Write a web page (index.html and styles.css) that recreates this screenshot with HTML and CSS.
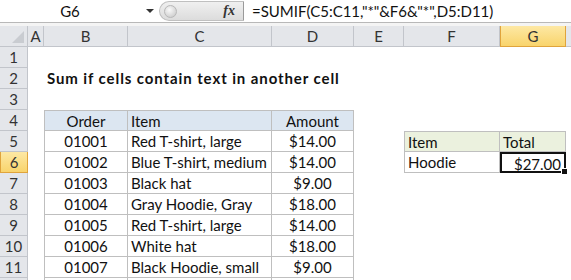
FILE: index.html
```html
<!DOCTYPE html>
<html lang="en">
<head>
<meta charset="UTF-8">
<title>Sum if cells contain text in another cell</title>
<link rel="stylesheet" href="styles.css">
</head>
<body>

<!-- formula bar -->
<div class="fbar">
    <div class="namebox">
        <span class="ref">G6</span>
        <span class="arrow"></span>
    </div>
    <div class="pill">
        <span class="knob"></span>
        <span class="fx">fx</span>
    </div>
    <div class="formula">=SUMIF(C5:C11,"*"&amp;F6&amp;"*",D5:D11)</div>
</div>
<div class="gap"></div>

<!-- sheet -->
<div class="sheet">
    <div class="corner"><span class="tri"></span></div>
    <div class="ch">A</div>
    <div class="ch">B</div>
    <div class="ch">C</div>
    <div class="ch">D</div>
    <div class="ch">E</div>
    <div class="ch">F</div>
    <div class="ch sel">G</div>
    <div class="ch end"></div>

    <!-- row 1 -->
    <div class="rh">1</div>
    <div></div><div></div><div></div><div></div><div></div><div></div><div></div><div></div>

    <!-- row 2 -->
    <div class="rh">2</div>
    <div></div>
    <div class="title">Sum if cells contain text in another cell</div>
    <div></div><div></div><div></div><div></div><div></div><div></div>

    <!-- row 3 -->
    <div class="rh">3</div>
    <div></div><div></div><div></div><div></div><div></div><div></div><div></div><div></div>

    <!-- row 4 -->
    <div class="rh">4</div>
    <div></div>
    <div class="t tl tt hd c">Order</div>
    <div class="t tt hd">Item</div>
    <div class="t tt hd c">Amount</div>
    <div></div><div></div><div></div><div></div>

    <!-- row 5 -->
    <div class="rh">5</div>
    <div></div>
    <div class="t tl c">01001</div>
    <div class="t">Red T-shirt, large</div>
    <div class="t c">$14.00</div>
    <div></div>
    <div class="t tl tt hd2">Item</div>
    <div class="t tt hd2">Total</div>
    <div></div>

    <!-- row 6 -->
    <div class="rh sel">6</div>
    <div></div>
    <div class="t tl c">01002</div>
    <div class="t">Blue T-shirt, medium</div>
    <div class="t c">$14.00</div>
    <div></div>
    <div class="t tl">Hoodie</div>
    <div class="t r active">$27.00<span class="handle"></span></div>
    <div></div>

    <!-- row 7 -->
    <div class="rh">7</div>
    <div></div>
    <div class="t tl c">01003</div>
    <div class="t">Black hat</div>
    <div class="t c">$9.00</div>
    <div></div><div></div><div></div><div></div>

    <!-- row 8 -->
    <div class="rh">8</div>
    <div></div>
    <div class="t tl c">01004</div>
    <div class="t">Gray Hoodie, Gray</div>
    <div class="t c">$18.00</div>
    <div></div><div></div><div></div><div></div>

    <!-- row 9 -->
    <div class="rh">9</div>
    <div></div>
    <div class="t tl c">01005</div>
    <div class="t">Red T-shirt, large</div>
    <div class="t c">$14.00</div>
    <div></div><div></div><div></div><div></div>

    <!-- row 10 -->
    <div class="rh">10</div>
    <div></div>
    <div class="t tl c">01006</div>
    <div class="t">White hat</div>
    <div class="t c">$18.00</div>
    <div></div><div></div><div></div><div></div>

    <!-- row 11 -->
    <div class="rh">11</div>
    <div></div>
    <div class="t tl c">01007</div>
    <div class="t">Black Hoodie, small</div>
    <div class="t c">$9.00</div>
    <div></div><div></div><div></div><div></div>

    <!-- row 12 (cut off by the window) -->
    <div class="rh"></div>
    <div></div>
    <div class="t tl"></div>
    <div class="t"></div>
    <div class="t"></div>
    <div></div><div></div><div></div><div></div>
</div>

</body>
</html>
```

FILE: styles.css
```css
body {
    margin: 0;
    width: 571px;
    height: 280px;
    overflow: hidden;
    background: #fff;
    font-family: Lato, "Open Sans", sans-serif;
    color: #111;
}

/* formula bar */
.fbar {
    display: flex;
    height: 22px;
    border-bottom: 1px solid #b8b8b8;
    background: #fff;
    font-size: 15px;
}

.namebox {
    width: 159px;
    display: flex;
    align-items: center;
}

.ref {
    width: 140px;
    text-align: center;
}

.arrow {
    width: 0;
    height: 0;
    border-left: 4px solid transparent;
    border-right: 4px solid transparent;
    border-top: 4px solid #333;
    margin-left: 6px;
}

.pill {
    width: 85px;
    margin-top: 1px;
    height: 20px;
    display: flex;
    align-items: center;
    background: linear-gradient(#f0f0f0, #dcdcdc);
    border: 1px solid #c0c0c0;
    border-right: 1px solid #9a9a9a;
    border-radius: 11px 0 0 11px;
    box-sizing: border-box;
}

.knob {
    width: 11px;
    height: 11px;
    border-radius: 50%;
    margin-left: 4px;
    background: radial-gradient(circle at 40% 35%, #fafafa, #c4c4c4);
    border: 1px solid #b8b8b8;
}

.fx {
    margin-left: auto;
    margin-right: 8px;
    font-family: "Liberation Serif", serif;
    font-style: italic;
    font-weight: bold;
    font-size: 14px;
    color: #333;
}

.formula {
    flex: 1;
    padding-left: 8px;
    line-height: 22px;
    white-space: nowrap;
}

.gap {
    height: 3px;
    background: #f4f4f4;
}

/* sheet grid */
.sheet {
    display: grid;
    grid-template-columns: 28px 16px 84px 144px 82px 50px 96px 66px 1fr;
    grid-template-rows: 21px;
    grid-auto-rows: 21px;
    height: 254px;
    overflow: hidden;
    font-size: 15px;
}

.sheet > div {
    box-sizing: border-box;
    line-height: 20px;
    white-space: nowrap;
}

.corner {
    background: #e4e6ea;
    border-right: 1px solid #c2c5cb;
    border-bottom: 1px solid #c2c5cb;
    position: relative;
}

.tri {
    position: absolute;
    right: 3px;
    bottom: 3px;
    width: 0;
    height: 0;
    border-left: 12px solid transparent;
    border-bottom: 12px solid #c9ccd1;
}

.ch, .rh {
    background: #e4e6ea;
    border-right: 1px solid #c2c5cb;
    border-bottom: 1px solid #c2c5cb;
    text-align: center;
    color: #333;
}

.ch.end {
    border-right: none;
}

.sel {
    background: linear-gradient(#fde8a4, #f9d46c);
    border-color: #e0a43c;
    border-left: 1px solid #e0a43c;
}

.title {
    font-weight: bold;
    letter-spacing: 0.9px;
    padding-left: 3px;
}

/* bordered table cells */
.t {
    border-right: 1px solid #bfbfbf;
    border-bottom: 1px solid #bfbfbf;
    padding: 0 3px;
}

.tl {
    border-left: 1px solid #bfbfbf;
}

.tt {
    border-top: 1px solid #bfbfbf;
}

.hd {
    background: #dce6f1;
}

.hd2 {
    background: #ebf1de;
}

.c {
    text-align: center;
}

.r {
    text-align: right;
}

.active {
    border: 2px solid #111;
    position: relative;
}

.handle {
    position: absolute;
    right: -4px;
    bottom: -4px;
    width: 5px;
    height: 5px;
    background: #111;
    border: 1px solid #fff;
}
```
